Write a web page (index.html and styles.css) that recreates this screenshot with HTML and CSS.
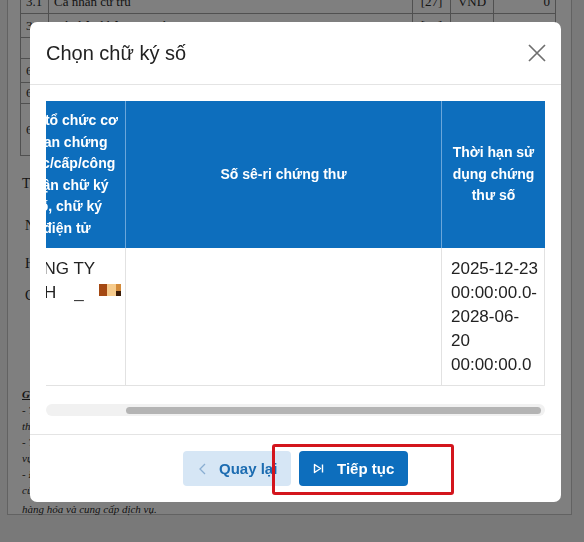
FILE: index.html
```html
<!DOCTYPE html>
<html lang="vi">
<head>
<meta charset="utf-8">
<title>Chọn chữ ký số</title>
<link rel="stylesheet" href="styles.css">
</head>
<body>
<div class="page">
  <div class="doc">
    <table class="doc-table">
      <colgroup>
        <col class="dc1"><col class="dc2"><col class="dc3"><col class="dc4"><col class="dc5">
      </colgroup>
      <tr class="r-a"><td>3.1</td><td>Cá nhân cư trú</td><td class="c">[27]</td><td class="c">VND</td><td class="r">0</td></tr>
      <tr class="r-a"><td>3.2</td><td>Cá nhân không cư trú</td><td class="c">[28]</td><td class="c">VND</td><td class="r">0</td></tr>
      <tr class="r-b"><td></td><td>Tổng số thuế thu nhập cá nhân</td><td class="c">[29]</td><td class="c">VND</td><td class="r">0</td></tr>
      <tr class="r-a"><td>6</td><td>Tổng số thuế được giảm</td><td class="c">[30]</td><td class="c">VND</td><td class="r">0</td></tr>
      <tr class="r-b"><td>6</td><td>Tổng số thuế đã khấu trừ</td><td class="c">[31]</td><td class="c">VND</td><td class="r">0</td></tr>
      <tr class="r-c"><td>6</td><td>Tổng số thuế phải nộp</td><td class="c">[32]</td><td class="c">VND</td><td class="r">0</td></tr>
    </table>
    <p class="doc-line l1">Tài liệu gửi kèm:</p>
    <p class="doc-line l2 ind">Người nộp thuế</p>
    <p class="doc-line l3 ind">Họ và tên</p>
    <p class="doc-line l4 ind">Chứng chỉ hành nghề số</p>
    <div class="notes">
      <div class="notes-title">Ghi chú:</div>
      <div>- Tổ chức, cá nhân trả thu nhập khai thuế thu nhập cá nhân</div>
      <div>thay cho cá nhân có thu nhập.</div>
      <div>- Thuế thu nhập cá nhân đối với thu nhập từ tiền lương, tiền công và dịch</div>
      <div>vụ khác.</div>
      <div>- Đối với cá nhân kinh doanh nộp thuế theo phương pháp khoán</div>
      <div>của hộ kinh doanh, cá nhân kinh doanh trong lĩnh vực cho thuê tài sản,</div>
      <div class="last">hàng hóa và cung cấp dịch vụ.</div>
    </div>
  </div>
</div>

<div class="overlay">
  <div class="modal">
    <div class="modal-header">
      <h1 class="modal-title">Chọn chữ ký số</h1>
      <button class="close-btn" aria-label="Đóng">
        <svg width="18" height="18" viewBox="0 0 18 18"><path d="M1 1 L17 17 M17 1 L1 17" stroke="#6f6f6f" stroke-width="1.7" fill="none"/></svg>
      </button>
    </div>
    <div class="modal-body">
      <div class="table-view">
        <table class="cert-table">
          <colgroup>
            <col class="cc1"><col class="cc2"><col class="cc3">
          </colgroup>
          <thead>
            <tr>
              <th class="org-head">Tên tổ chức cơ<br>quan chứng<br>thực/cấp/công<br>nhận chữ ký<br>số, chữ ký<br>điện tử</th>
              <th>Số sê-ri chứng thư</th>
              <th>Thời hạn sử<br>dụng chứng<br>thư số</th>
            </tr>
          </thead>
          <tbody>
            <tr>
              <td class="org-cell">CÔNG TY<br><span class="shift">TNHH</span><span class="mark">_</span><span class="pix"><i class="p1"></i><i class="p2"></i><i class="p3"></i></span></td>
              <td></td>
              <td>2025-12-23<br>00:00:00.0-<br>2028-06-<br>20<br>00:00:00.0</td>
            </tr>
          </tbody>
        </table>
      </div>
      <div class="hscroll"><div class="hscroll-thumb"></div></div>
    </div>
    <div class="modal-footer">
      <button class="btn btn-back">
        <svg width="7" height="12" viewBox="0 0 7 12"><polyline points="6,1 1,6 6,11" fill="none" stroke="#8aaed2" stroke-width="1.3"/></svg>
        <span>Quay lại</span>
      </button>
      <button class="btn btn-next">
        <svg width="11" height="11" viewBox="0 0 11 11"><path d="M1.5 1.5 L7.5 5.5 L1.5 9.5 Z M9.5 1.5 L9.5 9.5" fill="none" stroke="#fff" stroke-width="1.4" stroke-linejoin="round"/></svg>
        <span>Tiếp tục</span>
      </button>
    </div>
  </div>
</div>
<div class="annotation"></div>
</body>
</html>
```

FILE: styles.css
```css
html, body {
  margin: 0;
  height: 100%;
}
body {
  background: #f2f2f2;
  overflow: hidden;
  font-family: "Liberation Serif", "Times New Roman", serif;
  color: #2a2a2a;
}

/* background document */
.page {
  padding-left: 7px;
}
.doc {
  box-sizing: border-box;
  width: 565px;
  height: 527px;
  margin-top: -12px;
  background: #fff;
  border: 1px solid #c4c4c4;
  padding: 0 15px 0 12px;
}
.doc-table {
  width: 535px;
  border-collapse: collapse;
  table-layout: fixed;
  font-size: 13px;
}
.doc-table td {
  border: 1px solid #a0a0a0;
  padding: 0 5px;
  white-space: nowrap;
  overflow: hidden;
}
.dc1 { width: 28px; }
.dc2 { width: 364px; }
.dc3 { width: 38px; }
.dc4 { width: 43px; }
.dc5 { width: 62px; }
.doc-table .c { text-align: center; }
.doc-table .r { text-align: right; }
.r-a { height: 24px; }
.r-b { height: 21px; }
.r-c { height: 52px; }

.doc-line {
  margin: 0;
  font-size: 14px;
  line-height: 20px;
  padding-left: 2px;
}
.doc-line.ind { padding-left: 5px; }
.l1 { margin-top: 18px; }
.l2 { margin-top: 22px; }
.l3 { margin-top: 18px; }
.l4 { margin-top: 12px; }
.notes {
  margin-top: 80px;
  padding-left: 2px;
  font-style: italic;
  font-size: 11px;
  line-height: 16px;
  white-space: nowrap;
}
.notes-title {
  font-weight: bold;
  text-decoration: underline;
}
.notes .last { margin-top: 3px; }

/* overlay + modal */
.overlay {
  position: fixed;
  inset: 0;
  background: rgba(0, 0, 0, 0.5);
  padding: 22px 0 0 30px;
}
.modal {
  width: 531px;
  height: 480px;
  background: #fff;
  border-radius: 7px;
  overflow: hidden;
  display: flex;
  flex-direction: column;
  font-family: "Liberation Sans", Arial, sans-serif;
  color: #212121;
}
.modal-header {
  flex: none;
  height: 62px;
  display: flex;
  align-items: center;
  justify-content: space-between;
  padding: 0 15px 0 16px;
  border-bottom: 1px solid #e4e4e4;
}
.modal-title {
  margin: 0;
  font-size: 20px;
  font-weight: 400;
  color: #222;
}
.close-btn {
  border: 0;
  background: none;
  padding: 0;
  width: 18px;
  height: 18px;
  display: flex;
}
.modal-body {
  flex: none;
  box-sizing: border-box;
  height: 349px;
  padding: 16px 16px 0;
}
.table-view {
  width: 499px;
  overflow: hidden;
}
.cert-table {
  margin-left: -37px;
  width: 536px;
  table-layout: fixed;
  border-collapse: separate;
  border-spacing: 0;
}
.cc1 { width: 116px; }
.cc2 { width: 316px; }
.cc3 { width: 104px; }
.cert-table thead tr { height: 147px; }
.cert-table th {
  background: #0d6ebd;
  color: #fff;
  font-size: 14px;
  font-weight: bold;
  line-height: 21.5px;
  padding: 0 6px;
  text-align: center;
  vertical-align: middle;
}
.cert-table th + th {
  border-left: 1px solid #6aa6da;
}
.cert-table tbody tr { height: 137px; }
.cert-table td {
  vertical-align: top;
  padding: 9px 9px 8px;
  font-size: 17px;
  line-height: 24px;
  color: #222;
  border-bottom: 1px solid #e2e2e2;
  white-space: nowrap;
}
.cert-table td + td {
  border-left: 1px solid #e2e2e2;
}
.cert-table td:last-child {
  border-right: 1px solid #e2e2e2;
}
.shift {
  margin-left: -9px;
}
.mark {
  margin-left: 18px;
  color: #333;
}
.pix {
  display: inline-flex;
  margin-left: 15px;
  vertical-align: 2px;
}
.pix i {
  display: block;
  height: 12px;
}
.pix .p1 { width: 8px; background: #a44812; }
.pix .p2 { width: 9px; background: #f6cb8c; }
.pix .p3 { width: 5px; background: linear-gradient(#d38a3a 60%, #3b1c06 60%); }

.hscroll {
  margin-top: 18px;
  height: 12px;
  background: #f1f1f1;
  border-radius: 6px;
  padding-top: 3px;
  box-sizing: border-box;
}
.hscroll-thumb {
  margin-left: 80px;
  width: 415px;
  height: 7px;
  background: #b4b4b4;
  border-radius: 4px;
}

.modal-footer {
  flex: none;
  height: 67px;
  box-sizing: border-box;
  border-top: 1px solid #e4e4e4;
  padding-top: 16px;
  display: flex;
  justify-content: center;
  align-items: flex-start;
  gap: 8px;
}
.btn {
  height: 35px;
  box-sizing: border-box;
  display: inline-flex;
  align-items: center;
  gap: 13px;
  border: 0;
  border-radius: 4px;
  font-family: "Liberation Sans", Arial, sans-serif;
  font-size: 15px;
  font-weight: bold;
}
.btn-back {
  width: 108px;
  padding: 0 13px 0 16px;
  background: #d6e6f5;
  color: #1c6cb1;
}
.btn-next {
  width: 109px;
  padding: 0 13px 0 14px;
  background: #0d6ebd;
  color: #fff;
}

.annotation {
  position: absolute;
  left: 272px;
  top: 444px;
  width: 182px;
  height: 51px;
  box-sizing: border-box;
  border: 3px solid #d3151d;
  border-radius: 3px;
}
```
